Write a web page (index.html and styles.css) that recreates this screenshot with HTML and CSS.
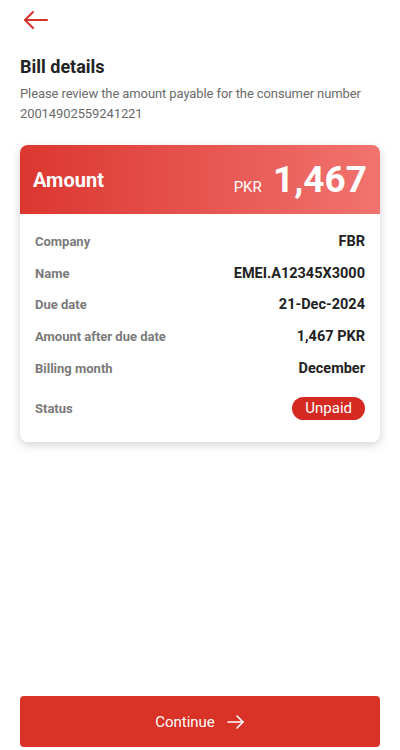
FILE: index.html
```html
<!DOCTYPE html>
<html lang="en">
<head>
    <meta charset="UTF-8">
    <meta name="viewport" content="width=device-width, initial-scale=1.0">
    <title>Bill details</title>
    <link rel="stylesheet" href="styles.css">
</head>
<body>
    <div class="page">
        <button class="back" aria-label="Back">
            <svg width="26" height="20" viewBox="0 0 26 20" fill="none" stroke="#d6322c" stroke-width="2" stroke-linecap="round" stroke-linejoin="round">
                <path d="M24 10H2"/>
                <path d="M10 2L2 10L10 18"/>
            </svg>
        </button>

        <h1 class="title">Bill details</h1>
        <p class="subtitle">Please review the amount payable for the consumer number 20014902559241221</p>

        <div class="card">
            <div class="card-head">
                <span class="head-label">Amount</span>
                <span class="head-amount"><small>PKR</small> 1,467</span>
            </div>
            <div class="card-body">
                <div class="row"><span class="label">Company</span><span class="value">FBR</span></div>
                <div class="row"><span class="label">Name</span><span class="value">EMEI.A12345X3000</span></div>
                <div class="row"><span class="label">Due date</span><span class="value">21-Dec-2024</span></div>
                <div class="row"><span class="label">Amount after due date</span><span class="value">1,467 PKR</span></div>
                <div class="row"><span class="label">Billing month</span><span class="value">December</span></div>
                <div class="row status-row"><span class="label">Status</span><span class="pill">Unpaid</span></div>
            </div>
        </div>

        <div class="spacer"></div>

        <button class="continue">
            Continue
            <svg width="18" height="14" viewBox="0 0 18 14" fill="none" stroke="#fff" stroke-width="1.6" stroke-linecap="round" stroke-linejoin="round">
                <path d="M1 7H16"/>
                <path d="M10 1L16 7L10 13"/>
            </svg>
        </button>
    </div>
</body>
</html>
```

FILE: styles.css
```css
body {
    margin: 0;
    background: #fff;
    font-family: Roboto, 'Noto Sans', sans-serif;
    color: #222;
}

.page {
    display: flex;
    flex-direction: column;
    height: 750px;
    padding: 0 20px 3px;
    box-sizing: border-box;
}

.back {
    align-self: flex-start;
    background: none;
    border: none;
    padding: 0;
    margin: 10px 0 0 3px;
    height: 20px;
    cursor: pointer;
}

.title {
    font-size: 18px;
    font-weight: 700;
    margin: 24px 0 0;
    line-height: 26px;
    color: #222;
}

.subtitle {
    margin: 4px 0 0;
    font-size: 13px;
    letter-spacing: -0.1px;
    line-height: 20px;
    color: #6b6b6b;
}

.card {
    margin-top: 21px;
    border-radius: 8px;
    box-shadow: 0 3px 10px rgba(0, 0, 0, 0.18);
    overflow: hidden;
}

.card-head {
    display: flex;
    justify-content: space-between;
    align-items: center;
    height: 69px;
    padding: 0 13px;
    background: linear-gradient(to right, #dc3630, #f1736f);
    color: #fff;
}

.head-label {
    font-size: 20px;
    font-weight: 700;
}

.head-amount {
    font-size: 37px;
    font-weight: 700;
}

.head-amount small {
    font-size: 15px;
    font-weight: 400;
    margin-right: 2px;
}

.card-body {
    padding: 12px 15px 17px;
}

.row {
    display: flex;
    justify-content: space-between;
    align-items: center;
    height: 31.6px;
}

.label {
    font-size: 13px;
    font-weight: 700;
    color: #7a7a7a;
}

.value {
    font-size: 14.5px;
    font-weight: 700;
    color: #222;
}

.status-row {
    margin-top: 9px;
}

.pill {
    background: #d42a22;
    color: #fff;
    font-size: 15px;
    padding: 2px 13px;
    border-radius: 12px;
    line-height: 19px;
}

.spacer {
    flex: 1;
}

.continue {
    display: flex;
    justify-content: center;
    align-items: center;
    gap: 12px;
    height: 51px;
    border: none;
    border-radius: 4px;
    background: #d93226;
    color: #fff;
    font-family: Roboto, sans-serif;
    font-size: 15px;
    cursor: pointer;
}
```
